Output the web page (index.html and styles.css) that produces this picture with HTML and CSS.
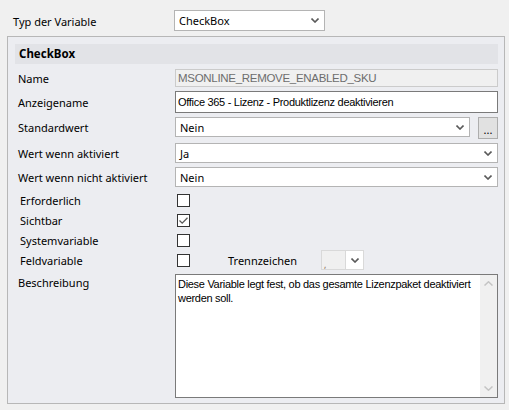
FILE: index.html
```html
<!DOCTYPE html>
<html lang="de">
  <head>
    <meta charset="UTF-8" />
    <meta name="viewport" content="width=device-width, initial-scale=1.0" />
    <title>Variable bearbeiten</title>
    <link rel="stylesheet" href="styles.css">
  </head>
  <body>
    <!-- Typ der Variable -->
    <div class="type-row">
      <label class="type-label">Typ der Variable</label>
      <div class="combo type-combo">
        <span class="combo-text">CheckBox</span>
        <svg class="chevron" width="8" height="5" viewBox="0 0 8 5"><path d="M0.5 0.5 L4 4 L7.5 0.5" fill="none" stroke="#5a5a5a" stroke-width="1.6"/></svg>
      </div>
    </div>

    <div class="panel">
      <div class="panel-header">CheckBox</div>

      <div class="row row-name">
        <label>Name</label>
        <div class="textbox disabled">MSONLINE_REMOVE_ENABLED_SKU</div>
      </div>

      <div class="row row-display">
        <label>Anzeigename</label>
        <div class="textbox active">Office 365 - Lizenz - Produktlizenz deaktivieren</div>
      </div>

      <div class="row row-select row-default">
        <label>Standardwert</label>
        <div class="with-button">
          <div class="combo">
            <span class="combo-text">Nein</span>
            <svg class="chevron" width="8" height="5" viewBox="0 0 8 5"><path d="M0.5 0.5 L4 4 L7.5 0.5" fill="none" stroke="#5a5a5a" stroke-width="1.6"/></svg>
          </div>
          <button class="dots">...</button>
        </div>
      </div>

      <div class="row row-select">
        <label>Wert wenn aktiviert</label>
        <div class="combo">
          <span class="combo-text">Ja</span>
          <svg class="chevron" width="8" height="5" viewBox="0 0 8 5"><path d="M0.5 0.5 L4 4 L7.5 0.5" fill="none" stroke="#5a5a5a" stroke-width="1.6"/></svg>
        </div>
      </div>

      <div class="row row-select">
        <label>Wert wenn nicht aktiviert</label>
        <div class="combo">
          <span class="combo-text">Nein</span>
          <svg class="chevron" width="8" height="5" viewBox="0 0 8 5"><path d="M0.5 0.5 L4 4 L7.5 0.5" fill="none" stroke="#5a5a5a" stroke-width="1.6"/></svg>
        </div>
      </div>

      <!-- Checkboxes -->
      <div class="checks">
        <div class="row row-check">
          <label>Erforderlich</label>
          <span class="box"></span>
        </div>
        <div class="row row-check">
          <label>Sichtbar</label>
          <span class="box">
            <svg width="11" height="11" viewBox="0 0 11 11"><path d="M1.5 5.5 L4.2 8.2 L9.5 2.8" fill="none" stroke="#5a5a5a" stroke-width="1.3"/></svg>
          </span>
        </div>
        <div class="row row-check">
          <label>Systemvariable</label>
          <span class="box"></span>
        </div>
        <div class="row row-check">
          <label>Feldvariable</label>
          <div class="field-line">
            <span class="box"></span>
            <span class="sep-label">Trennzeichen</span>
            <div class="sep-combo">
              <span class="sep-value">,</span>
              <span class="sep-arrow">
                <svg width="8" height="5" viewBox="0 0 8 5"><path d="M0.5 0.5 L4 4 L7.5 0.5" fill="none" stroke="#5a5a5a" stroke-width="1.6"/></svg>
              </span>
            </div>
          </div>
        </div>
      </div>

      <div class="row row-desc">
        <label>Beschreibung</label>
        <div class="memo">
          <div class="memo-text">Diese Variable legt fest, ob das gesamte Lizenzpaket deaktiviert werden soll.</div>
          <div class="scrollbar">
            <svg width="9" height="5" viewBox="0 0 9 5"><path d="M0.5 4.5 L4.5 0.8 L8.5 4.5" fill="none" stroke="#c4c4c4" stroke-width="1.5"/></svg>
            <svg width="9" height="5" viewBox="0 0 9 5"><path d="M0.5 0.5 L4.5 4.2 L8.5 0.5" fill="none" stroke="#c4c4c4" stroke-width="1.5"/></svg>
          </div>
        </div>
      </div>
    </div>
  </body>
</html>
```

FILE: styles.css
```css
body {
  margin: 0;
  background: #f0f0f0;
  font-family: "Noto Sans", "DejaVu Sans", sans-serif;
  font-size: 11px;
  color: #000;
  width: 509px;
  height: 410px;
  overflow: hidden;
}

/* top row */
.type-row {
  display: flex;
  align-items: center;
  height: 21px;
  margin-top: 10px;
  padding-left: 13px;
}
.type-label {
  width: 161px;
  padding-top: 2px;
}
.combo {
  box-sizing: border-box;
  display: flex;
  align-items: center;
  justify-content: space-between;
  background: #fff;
  border: 1px solid #b4b4b4;
  padding: 0 5px 0 4px;
  height: 20px;
}
.type-combo {
  width: 151px;
  height: 21px;
}
.combo-text {
  line-height: 1;
}

/* panel */
.panel {
  box-sizing: border-box;
  margin: 5px 0 0 7px;
  width: 498px;
  height: 368px;
  border: 1px solid #b7b7b7;
  background: #ecedf1;
  padding: 7px 6px 0 7px;
}
.panel-header {
  height: 20px;
  line-height: 20px;
  background: #e2e3e7;
  font-weight: bold;
  padding-left: 4px;
  font-size: 11.5px;
}

.row {
  display: grid;
  grid-template-columns: 160px 1fr;
  align-items: center;
}
.row label {
  padding-left: 3px;
}
.textbox {
  box-sizing: border-box;
  display: flex;
  align-items: center;
  padding-left: 2px;
  font-family: "Liberation Sans", Arial, sans-serif;
  font-size: 11px;
  letter-spacing: -0.3px;
  white-space: nowrap;
  overflow: hidden;
}
.row-name {
  margin-top: 5px;
  height: 18px;
}
.textbox.disabled {
  height: 18px;
  background: #f0f0f0;
  border: 1px solid #cbcbcb;
  color: #6d6d6d;
  font-size: 11.5px;
}
.row-display {
  margin-top: 4px;
  height: 22px;
}
.textbox.active {
  height: 22px;
  background: #fff;
  border: 1px solid #7a7a7a;
}

.row-select {
  margin-top: 4px;
  height: 20px;
}
.row-default {
  height: 22px;
  margin-top: 4px;
  align-items: start;
}
.row-default label {
  padding-top: 3px;
}
.with-button {
  display: flex;
  gap: 8px;
}
.with-button .combo {
  flex: 1;
}
.dots {
  box-sizing: border-box;
  width: 20px;
  height: 22px;
  padding: 0 0 3px;
  border: 1px solid #adadad;
  background: #e1e1e1;
  font-family: "Noto Sans", sans-serif;
  font-size: 11px;
  display: flex;
  align-items: flex-end;
  justify-content: center;
  line-height: 1;
}

/* checkboxes */
.checks {
  margin-top: 3px;
}
.row-check {
  height: 20px;
}
.row-check label {
  padding-left: 5px;
}
.box {
  box-sizing: border-box;
  display: flex;
  align-items: center;
  justify-content: center;
  width: 13px;
  height: 13px;
  margin-left: 2px;
  border: 1px solid #333;
  background: #fff;
}
.field-line {
  display: flex;
  align-items: center;
}
.sep-label {
  margin-left: 38px;
  width: 93px;
}
.sep-combo {
  display: flex;
  height: 20px;
  width: 43px;
  box-sizing: border-box;
  border: 1px solid #d9d9d9;
}
.sep-value {
  flex: 1;
  background: #f0f0f0;
  font-size: 9px;
  color: #8a6a50;
  padding-left: 2px;
  display: flex;
  align-items: flex-end;
  line-height: 1;
}
.sep-arrow {
  width: 17px;
  background: #fff;
  border-left: 1px solid #d9d9d9;
  display: flex;
  align-items: center;
  justify-content: center;
}

/* description */
.row-desc {
  margin-top: 4px;
  align-items: start;
}
.row-desc label {
  padding-top: 1px;
}
.memo {
  box-sizing: border-box;
  height: 124px;
  border: 1px solid #7a7a7a;
  background: #fff;
  display: flex;
}
.memo-text {
  flex: 1;
  padding: 2px 2px;
  font-family: "Liberation Sans", Arial, sans-serif;
  font-size: 11px;
  letter-spacing: -0.3px;
  line-height: 14px;
}
.scrollbar {
  width: 17px;
  background: #f0f0f0;
  display: flex;
  flex-direction: column;
  justify-content: space-between;
  align-items: center;
  padding: 6px 0 6px;
}
```
